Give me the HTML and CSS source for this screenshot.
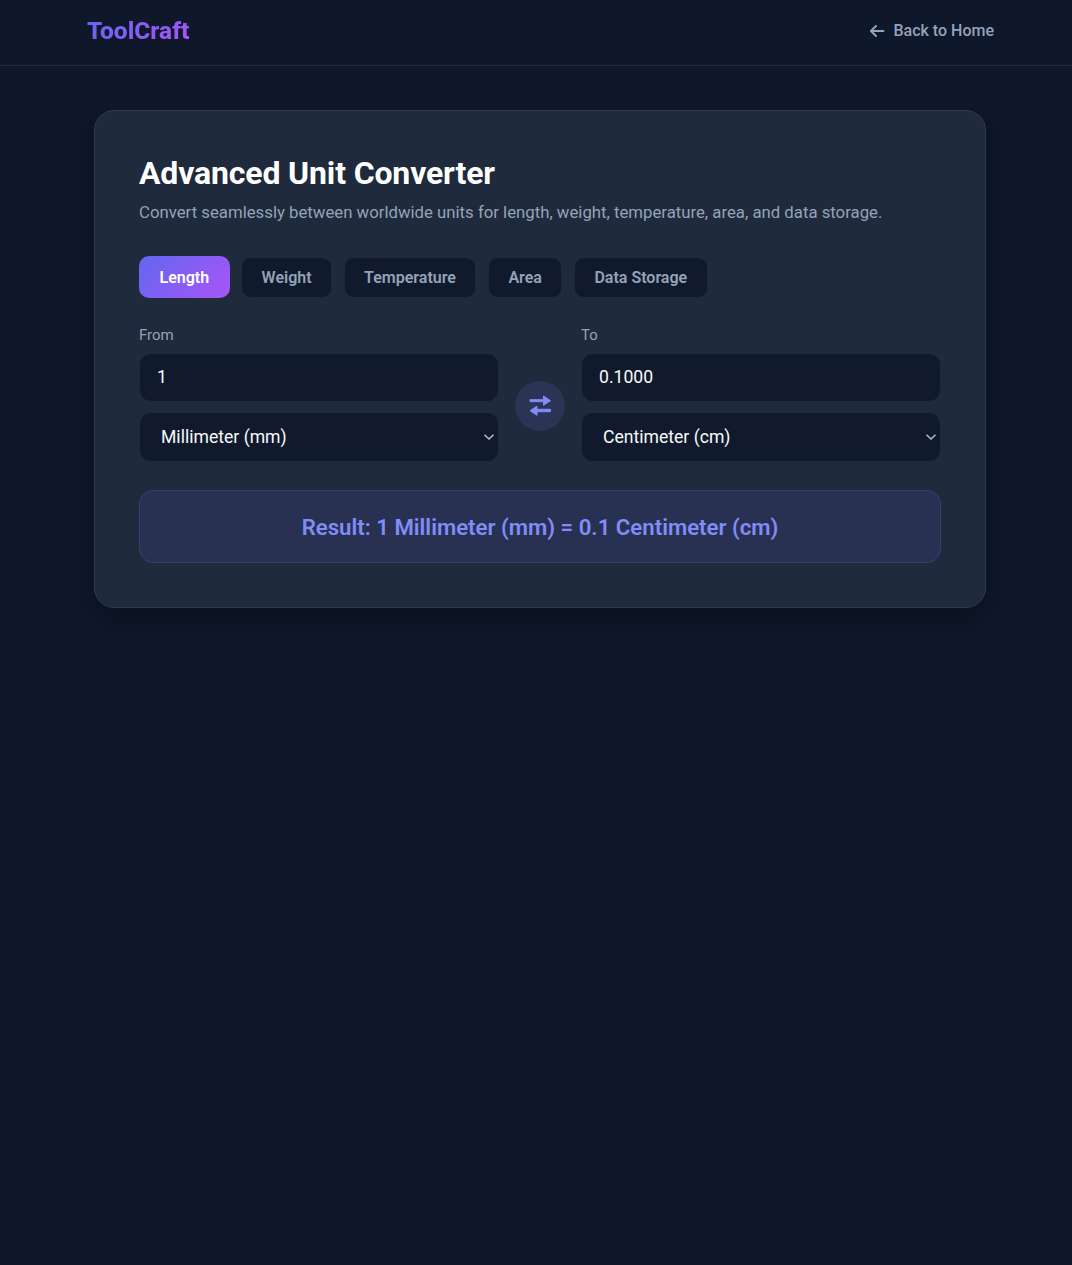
FILE: index.html
```html
<!DOCTYPE html>
<html lang="en">
<head>
    <meta charset="UTF-8">
    <meta name="viewport" content="width=device-width, initial-scale=1.0">
    <title>Advanced Unit Converter - ToolCraft</title>
    <link rel="stylesheet" href="styles.css">
</head>
<body>
    <nav class="navbar">
        <div class="nav-inner">
            <a class="logo" href="#">ToolCraft</a>
            <a class="back-link" href="#">
                <svg class="back-icon" viewBox="0 0 16 16" width="16" height="16" fill="none" stroke="currentColor" stroke-width="2" stroke-linecap="round" stroke-linejoin="round">
                    <path d="M14.500 8H2"/>
                    <path d="M7 3 2 8l5 5"/>
                </svg>
                Back to Home
            </a>
        </div>
    </nav>

    <main class="container">
        <section class="card">
            <h1>Advanced Unit Converter</h1>
            <p class="subtitle">Convert seamlessly between worldwide units for length, weight, temperature, area, and data storage.</p>

            <div class="tabs">
                <button class="tab active">Length</button>
                <button class="tab">Weight</button>
                <button class="tab">Temperature</button>
                <button class="tab">Area</button>
                <button class="tab">Data Storage</button>
            </div>

            <div class="converter">
                <div class="field">
                    <label for="from-value">From</label>
                    <input type="number" id="from-value" value="1">
                    <select id="from-unit">
                        <option>Millimeter (mm)</option>
                        <option>Centimeter (cm)</option>
                        <option>Meter (m)</option>
                    </select>
                </div>

                <button class="swap-btn" aria-label="Swap units">
                    <svg viewBox="0 0 24 24" width="24" height="24" fill="#818cf8" stroke="#818cf8" stroke-width="1" stroke-linejoin="round">
                        <path d="M2 5.700h13.500V2L22.500 6.700l-7 4.600V7.700H2z"/>
                        <path d="M22.500 15.300H9v-3.200L2 16.700l7 4.600v-3.600h13.500z"/>
                    </svg>
                </button>

                <div class="field">
                    <label for="to-value">To</label>
                    <input type="text" id="to-value" value="0.1000" readonly>
                    <select id="to-unit">
                        <option>Centimeter (cm)</option>
                        <option>Millimeter (mm)</option>
                        <option>Meter (m)</option>
                    </select>
                </div>
            </div>

            <div class="result">Result: 1 Millimeter (mm) = 0.1 Centimeter (cm)</div>
        </section>
    </main>
</body>
</html>
```

FILE: styles.css
```css
body {
    font-family: Roboto, "Liberation Sans", sans-serif;
    margin: 0;
    padding: 0;
    min-height: 1265px;
    background-color: #0f172a;
    color: #f8fafc;
}

.navbar {
    height: 65px;
    border-bottom: 1px solid #1e293b;
}

.nav-inner {
    box-sizing: border-box;
    height: 100%;
    padding: 0 78px 4px 87px;
    display: flex;
    justify-content: space-between;
    align-items: center;
}

.logo {
    font-size: 24.5px;
    font-weight: 800;
    text-decoration: none;
    background: linear-gradient(135deg, #6366f1, #a855f7);
    -webkit-background-clip: text;
    background-clip: text;
    color: transparent;
}

.back-link {
    display: flex;
    align-items: center;
    gap: 8px;
    font-size: 16px;
    font-weight: 500;
    color: #94a3b8;
    text-decoration: none;
}

.container {
    width: 892px;
    margin: 44px 0 0 94px;
}

.card {
    padding: 44px;
    background-color: #1f2a3c;
    border: 1px solid #2e3a4d;
    border-radius: 20px;
    box-shadow: 0 10px 30px rgba(0, 0, 0, 0.3);
}

h1 {
    margin: 0 0 9px;
    font-size: 32px;
    line-height: 36px;
    font-weight: 700;
    letter-spacing: -0.15px;
    color: #fff;
}

.subtitle {
    margin: 0 0 32px;
    font-size: 16.75px;
    line-height: 24px;
    color: #94a3b8;
}

.tabs {
    display: flex;
    align-items: center;
    gap: 11.5px;
    margin-bottom: 27px;
}

.tab {
    padding: 0 19.5px;
    height: 41px;
    font-family: inherit;
    font-size: 16px;
    font-weight: 600;
    color: #94a3b8;
    background-color: #111a2d;
    border: 1px solid #1e293b;
    border-radius: 10px;
}

.tab.active {
    height: 42px;
    color: #fff;
    border-color: transparent;
    background: linear-gradient(135deg, #6366f1, #a855f7) border-box;
}

.converter {
    display: grid;
    grid-template-columns: 1fr 50px 1fr;
    gap: 16px;
    align-items: center;
    margin-bottom: 28px;
}

.field {
    display: flex;
    flex-direction: column;
}

.field label {
    margin-bottom: 8px;
    font-size: 15px;
    line-height: 20px;
    color: #94a3b8;
}

.field input,
.field select {
    box-sizing: border-box;
    width: 100%;
    font-family: inherit;
    font-size: 17.6px;
    color: #f8fafc;
    background-color: #111a2d;
    border: 1px solid #1e293b;
    border-radius: 12px;
    outline: none;
}

.field input {
    height: 49px;
    margin-bottom: 10px;
    padding: 0 17px 2px;
    -moz-appearance: textfield;
}

.field input::-webkit-inner-spin-button {
    display: none;
}

.field select {
    height: 50px;
    padding: 0 30px 0 21px;
    appearance: none;
    -webkit-appearance: none;
    background-image: url("data:image/svg+xml,%3Csvg xmlns='http://www.w3.org/2000/svg' width='10' height='6' fill='none' stroke='%23b4bdcb' stroke-width='1.5'%3E%3Cpath d='M.5.800 5 5l4.500-4.200'/%3E%3C/svg%3E");
    background-repeat: no-repeat;
    background-position: right 4px center;
}

.swap-btn {
    display: flex;
    align-items: center;
    justify-content: center;
    width: 50px;
    height: 50px;
    margin-top: 24px;
    padding: 0;
    border: none;
    border-radius: 50%;
    background-color: #2b3454;
}

.result {
    box-sizing: border-box;
    height: 73px;
    display: flex;
    align-items: center;
    justify-content: center;
    font-size: 22.2px;
    font-weight: 600;
    color: #818cf8;
    background-color: #283152;
    border: 1px solid #36406f;
    border-radius: 14px;
}
```
